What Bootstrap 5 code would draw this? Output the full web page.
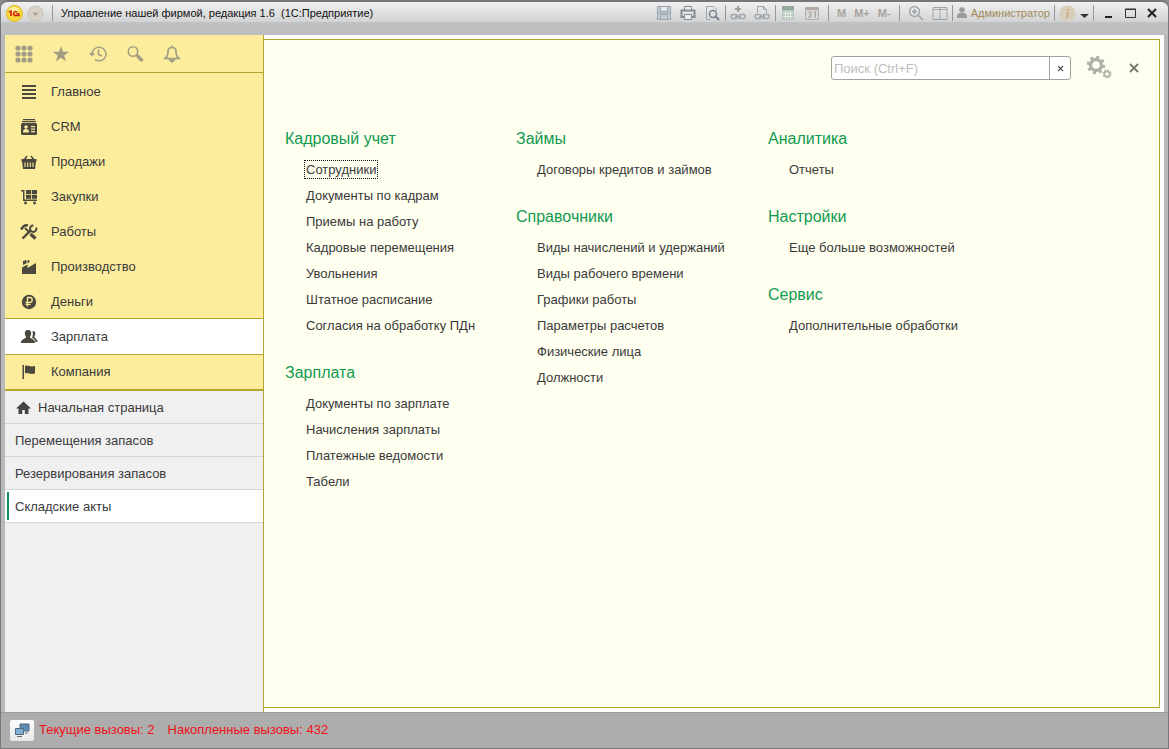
<!DOCTYPE html>
<html lang="ru">
<head>
<meta charset="utf-8">
<meta name="viewport" content="width=device-width, initial-scale=1">
<title>Управление нашей фирмой, редакция 1.6</title>
<link href="https://cdn.jsdelivr.net/npm/bootstrap@5.3.0/dist/css/bootstrap.min.css" rel="stylesheet">
<style>
  :root { --line: #b5a52a; --sun: #fced9d; --ink: #3a3a3a; --grn: #119a50; }
  body { font-family: "Liberation Sans", Arial, sans-serif; font-size: 13px; line-height: 20px; color: var(--ink); background: #8b8b8d; }
  a { color: inherit; text-decoration: none; }
  button { background: none; border: 0; padding: 0; color: inherit; display: inline-flex; align-items: center; justify-content: center; }
  svg { display: block; flex: none; }
  .window { border: 1px solid #77777b; border-top-width: 2px; border-radius: 8px 8px 0 0; background: #b9b9bb; padding: 0 4px 0 4px; overflow: hidden; }
  .titlebar { height: 33px; margin: 0 -4px; padding: 0 10px 11px 5px; background: linear-gradient(#f0f0f0 0, #d2d3d4 60%, #c0c1c2 62%, #bdbebf 100%); font-size: 11px; color: #111; }
  .caption { white-space: pre; }
  .tsep { width: 1px; height: 16px; background: #98989a; }
  .tsep.tight { margin: 0 4px 0 5px; }
  .tools { color: #9fa5ab; }
  .user { color: #a18a58; }
  .mem { font-weight: 700; font-size: 11px; color: #a8a29e; }
  .side { width: 259px; border-right: 1px solid var(--line); background: #f0f0f0; }
  .quick { height: 38px; padding-left: 9px; gap: 17px; background: var(--sun); border-bottom: 1px solid var(--line); color: #a39c84; }
  .quick button { width: 20px; height: 37px; }
  .sections { background: var(--sun); border-bottom: 2px solid var(--line); }
  .sections a { height: 35px; padding-left: 14px; padding-top: 2px; gap: 12px; }
  .sections a:last-child { height: 34px; padding-top: 0; }
  .sections a.current { height: 37px; padding-top: 0; background: #fff; border: solid var(--line); border-width: 1px 0; }
  .sections svg { color: #4b483d; }
  .opened a { height: 33px; padding-left: 10px; padding-top: 2px; gap: 6px; border-bottom: 1px solid #d5d5d5; position: relative; }
  .opened a.current { background: #fff; }
  .opened a.current::before { content: ""; position: absolute; left: 2px; top: 2px; bottom: 2px; width: 2px; background: #12905c; }
  .stage { background: #fff; padding: 4px 4px 4px 0; }
  .sheet { background: #fffff0; border: 1px solid var(--line); border-left: 0; }
  .sheet-head { height: 65px; padding: 0 19px 9px 0; }
  .finder { width: 240px; height: 24px; border: 1px solid #a3a39c; border-radius: 3px; background: #fff; overflow: hidden; }
  .finder input { border: 0; outline: 0; padding: 2px 2px 0; min-width: 0; color: var(--ink); background: none; }
  .finder input::placeholder { color: #bdbdbd; opacity: 1; }
  .finder button { width: 21px; border-left: 1px solid #a3a39c; }
  .menu { display: grid; grid-template-columns: 231px 252px 1fr; padding-left: 21px; }
  .menu h2 { font-size: 16px; line-height: 20px; font-weight: 400; color: var(--grn); margin: 0; padding: 24px 0 8px; }
  .menu ul { padding-left: 21px; }
  .menu li { line-height: 26px; }
  .menu a.focused { outline: 1px dotted #111; outline-offset: 1px; }
  .status { height: 36px; margin: 0 -4px; padding: 0 9px 1px; background: #adadad; border-top: 1px solid #9b9b9b; color: #f01018; gap: 5px; }
  .status button { width: 24px; height: 21px; background: linear-gradient(#fff, #e6e6e6); border-radius: 2px; }
</style>
</head>
<body>
<div class="window d-flex flex-column vh-100">
  <header class="titlebar d-flex align-items-center">
    <svg width="17" height="17" viewBox="0 0 17 17"><circle cx="8.500" cy="8.500" r="8" fill="#f9d93b" stroke="#e2b62a"/><ellipse cx="8" cy="5" rx="5" ry="3" fill="#fff3a0"/><path d="M3 7l2-1v5M11 7.200a2 2 0 1 0-1 3.300h4M10.500 8.800h3" fill="none" stroke="#cf2317" stroke-width="1.600"/></svg>
    <button class="ms-1" aria-label="Меню программы"><svg width="17" height="17" viewBox="0 0 17 17"><circle cx="8.500" cy="8.500" r="7.500" fill="#d8d2c6" stroke="#c5c0b6"/><path d="M5 7.500h7l-3.500 3.500z" fill="#aaa296"/></svg></button>
    <span class="tsep ms-2"></span>
    <span class="caption ms-2">Управление нашей фирмой, редакция 1.6  (1С:Предприятие)</span>
    <div class="tools d-flex align-items-center ms-auto">
      <div class="d-flex gap-2">
        <button aria-label="Сохранить"><svg width="16" height="16" viewBox="0 0 16 16" fill="none" stroke="currentColor"><path d="M1.500 1.500h13v13h-13zM4.500 1.500v5h7v-5M4.500 14.500v-5h7v5M1.500 8h13" fill="#c0ccd6"/></svg></button>
        <button aria-label="Печать"><svg width="16" height="16" viewBox="0 0 16 16" fill="none" stroke="#858d94"><path d="M4.500 5V1.500h7V5M4.500 9.500h7v5h-7z" fill="#eee"/><path d="M4 12H1.500V5.500h13V12H12" stroke-width="2"/></svg></button>
        <button aria-label="Просмотр"><svg width="16" height="16" viewBox="0 0 16 16" fill="none" stroke="currentColor"><path d="M6 14.500H2.500v-13h7l3 3V6"/><circle cx="9" cy="9" r="3.500" stroke="#78838d" stroke-width="1.500"/><path d="M11.500 11.500L15 15" stroke="#78838d" stroke-width="2"/></svg></button>
      </div>
      <span class="tsep tight"></span>
      <div class="d-flex gap-2">
        <button aria-label="Добавить ссылку"><svg width="16" height="16" viewBox="0 0 16 16" fill="none" stroke="currentColor"><path d="M8 1v6M5 4h6" stroke="#9f9f98" stroke-width="2"/><rect x="1" y="9.500" width="6" height="4" rx="1.500" stroke-width="1.400"/><rect x="9" y="9.500" width="6" height="4" rx="1.500" stroke-width="1.400"/><path d="M5 11.500h6" stroke-width="1.400"/></svg></button>
        <button aria-label="Перейти по ссылке"><svg width="16" height="16" viewBox="0 0 16 16" fill="none" stroke="currentColor"><path d="M3.500 8V1.500h6l3 3V8M9.500 1.500v3h3"/><rect x="1" y="9.500" width="6" height="4" rx="1.500" stroke-width="1.400"/><rect x="9" y="9.500" width="6" height="4" rx="1.500" stroke-width="1.400"/><path d="M5 11.500h6" stroke-width="1.400"/></svg></button>
      </div>
      <span class="tsep tight"></span>
      <div class="d-flex gap-2">
        <button aria-label="Калькулятор"><svg width="16" height="16" viewBox="0 0 16 16"><path d="M2 1h12v14H2z" fill="#b9c9bd"/><path d="M2 1h12v4H2z" fill="#93ab9c"/><path d="M5.500 6v8M8 6v8M10.500 6v8M3 8.500h10M3 11.500h10" stroke="#e5ebe6"/></svg></button>
        <button aria-label="Календарь"><svg width="16" height="16" viewBox="0 0 16 16"><path d="M1.500 2.500h13v12h-13z" fill="#d9d7d5" stroke="#b4afac"/><path d="M2 2h12v3H2z" fill="#b4aaa5"/><path d="M4 7h3v5H4M5 9.500h2M10 7.500l1.500-1V13" fill="none" stroke="#a2a0a0"/></svg></button>
      </div>
      <span class="tsep ms-2 me-1"></span>
      <div class="d-flex gap-2 ps-1 mem"><button class="fw-bold">M</button><button class="fw-bold">M+</button><button class="fw-bold">M-</button></div>
      <span class="tsep mx-2"></span>
      <div class="d-flex gap-2">
        <button aria-label="Масштаб"><svg width="16" height="16" viewBox="0 0 16 16" fill="none" stroke="currentColor"><circle cx="6.500" cy="6.500" r="5" stroke-width="1.300"/><path d="M4 6.500h5M6.500 4v5M10.500 10.500L15 15" stroke-width="1.600"/></svg></button>
        <button aria-label="Панели"><svg width="16" height="16" viewBox="0 0 16 16" fill="none" stroke="currentColor"><path d="M1 2.500h14v12H1zM8 2v12M1 4.500h14"/></svg></button>
      </div>
      <span class="tsep mx-1"></span>
      <button class="user"><svg class="me-1" width="10" height="12" viewBox="0 0 10 12" fill="#9b9b9b"><circle cx="5" cy="3" r="2.800"/><path d="M0 11c0-5 2-5 5-5s5 0 5 5z"/></svg>Администратор</button>
      <span class="tsep mx-1"></span>
      <button aria-label="О программе"><svg width="17" height="17" viewBox="0 0 17 17"><circle cx="8.500" cy="8.500" r="8" fill="#d9cebb"/><path d="M9 4v1.500M9 7l-1 5.500" stroke="#c3a878" stroke-width="1.600"/></svg></button>
      <button class="ms-1" aria-label="Еще"><svg width="9" height="12" viewBox="0 0 9 12"><path d="M0 7h9L4.500 11z" fill="#333"/></svg></button>
      <span class="tsep mx-1"></span>
      <div class="d-flex text-dark ms-1 gap-2">
        <button aria-label="Свернуть"><svg width="14" height="14" viewBox="0 0 14 14"><path d="M3 11h7" stroke="#222" stroke-width="2"/></svg></button>
        <button aria-label="Развернуть"><svg width="14" height="14" viewBox="0 0 14 14"><path d="M1.500 3.500h10v8h-10zM1 3h11" fill="none" stroke="#333"/></svg></button>
        <button aria-label="Закрыть окно"><svg width="12" height="14" viewBox="0 0 12 14"><path d="M2 3l8 8M10 3l-8 8" stroke="#222" stroke-width="2"/></svg></button>
      </div>
    </div>
  </header>

  <div class="d-flex flex-grow-1">
    <aside class="side flex-shrink-0">
      <div class="quick d-flex align-items-center">
        <button aria-label="Функции"><svg width="18" height="18" viewBox="0 0 18 18" fill="currentColor"><circle cx="3" cy="3" r="2.600"/><circle cx="9" cy="3" r="2.600"/><circle cx="15" cy="3" r="2.600"/><circle cx="3" cy="9" r="2.600"/><circle cx="9" cy="9" r="2.600"/><circle cx="15" cy="9" r="2.600"/><circle cx="3" cy="15" r="2.600"/><circle cx="9" cy="15" r="2.600"/><circle cx="15" cy="15" r="2.600"/></svg></button>
        <button aria-label="Избранное"><svg width="18" height="18" viewBox="0 0 18 18" fill="currentColor"><path d="M9 1l2 5.800h6.200l-5 3.600 1.900 6L9 12.800l-5.100 3.600 1.900-6-5-3.600H7z"/></svg></button>
        <button aria-label="История"><svg width="18" height="18" viewBox="0 0 18 18" fill="none" stroke="currentColor" stroke-width="1.500"><path d="M3 9a7 6.800 0 1 1 3 5.600M9.500 4.500v5l3.500 1.500"/><path d="M0 8h6l-3 3.500z" fill="currentColor" stroke="none"/></svg></button>
        <button aria-label="Поиск"><svg width="18" height="18" viewBox="0 0 18 18" fill="none" stroke="currentColor"><circle cx="7" cy="6.500" r="4.700" stroke-width="1.600"/><path d="M10.500 10l1.500 1.500" stroke-width="1.500"/><path d="M12 11.500l3.500 3.500" stroke-width="3.400" stroke-linecap="round"/></svg></button>
        <button aria-label="Уведомления"><svg width="18" height="18" viewBox="0 0 18 18" fill="none" stroke="currentColor" stroke-width="1.700"><path d="M9 2.500c-4 0-4 3-4.200 6-.1 2-.8 3.500-2.800 5h14c-2-1.500-2.700-3-2.800-5-.2-3-.2-6-4.200-6zM9 .5v2"/><path d="M7 15h4l-2 2z" fill="currentColor"/></svg></button>
      </div>
      <nav class="sections d-flex flex-column" aria-label="Разделы">
        <a href="#" class="d-flex align-items-center"><svg width="20" height="18" viewBox="0 0 20 18"><path d="M3 3h14M3 7h14M3 11h14M3 15h14" stroke="currentColor" stroke-width="2"/></svg>Главное</a>
        <a href="#" class="d-flex align-items-center"><svg width="20" height="18" viewBox="0 0 20 18" fill="currentColor"><path d="M4 1h12v1.200H4zM3 3h14v1.200H3z"/><rect x="2" y="5" width="16" height="12" rx="1.500"/><g fill="#fbed9e"><circle cx="7" cy="9" r="1.800"/><path d="M4 14.500c0-3 1-3.500 3-3.500s3 .5 3 3.500zM12 8h4v1.200h-4zM12 10.500h4v1.200h-4zM12 13h4v1.200h-4z"/></g></svg>CRM</a>
        <a href="#" class="d-flex align-items-center"><svg width="20" height="18" viewBox="0 0 20 18"><path d="M5 7l3-4M15 7l-3-4" stroke="currentColor" stroke-width="1.500"/><path d="M2.500 6h15v2.500H17L16 16H4L3 8.500h-.5z" fill="currentColor"/><path d="M6 9.500v4.500M8.700 9.500v4.500M11.300 9.500v4.500M14 9.500v4.500" stroke="#fbed9e" stroke-width="1.100"/></svg>Продажи</a>
        <a href="#" class="d-flex align-items-center"><svg width="20" height="18" viewBox="0 0 20 18" fill="currentColor"><path d="M2 2h3.500v9.500H18V13H4V3.500H2zM7 2h5v4H7zM12.800 2H18v4h-5.200zM7 6.800h5v4H7zM12.800 6.800H18v4h-5.200z"/><circle cx="6.500" cy="15" r="1.400"/><circle cx="15.500" cy="15" r="1.400"/></svg>Закупки</a>
        <a href="#" class="d-flex align-items-center"><svg width="20" height="18" viewBox="0 0 20 18" fill="none" stroke="currentColor"><path d="M3.500 15.500l8.500-8.500" stroke-width="2.400"/><path d="M17.200 4.500a3.200 3.200 0 1 1-2.800-2" stroke-width="2"/><path d="M2 6.500l3-3.500c1.500-1 3-.8 4-.3" stroke-width="2.600"/><path d="M6 5l5 5" stroke-width="1.800"/><path d="M11.500 11l5 4.500" stroke-width="3.200"/></svg>Работы</a>
        <a href="#" class="d-flex align-items-center"><svg width="20" height="18" viewBox="0 0 20 18" fill="currentColor"><path d="M3 16V9.500l5.500-3V10l8.500-5v11zM4 3l3.500-1v3.200L4 7zM8.500 2.500l1.800-.7V4.500l-1.800.8z"/></svg>Производство</a>
        <a href="#" class="d-flex align-items-center"><svg width="20" height="18" viewBox="0 0 20 18"><circle cx="10" cy="9" r="7.200" fill="currentColor"/><path d="M8.500 13.500v-9h2.300a2.400 2.400 0 0 1 0 4.800H6.500M6.500 11.400h5" fill="none" stroke="#fbed9e" stroke-width="1.300"/></svg>Деньги</a>
        <a href="#" class="current d-flex align-items-center" aria-current="page"><svg width="20" height="18" viewBox="0 0 20 18" fill="currentColor"><path d="M9 2c2.600 0 3.300 1.700 3.200 3.600-.1 1.700-.7 2.600-1.300 3.300.1 1.700 4.600 1.800 5.100 5.100v1H2v-1c.5-3.300 5-3.400 5.100-5.100-.6-.7-1.200-1.600-1.300-3.300C5.700 3.700 6.400 2 9 2z"/><path d="M13.500 3c2.300-.2 3 1.400 2.800 3-.1 1.300-.6 1.900-1 2.600.2 2 3 2 3.200 5.400h-1.700c-.6-2.500-2.500-3.200-3.800-4.300.8-1.500 1.200-4 .5-6.700z"/></svg>Зарплата</a>
        <a href="#" class="d-flex align-items-center"><svg width="20" height="18" viewBox="0 0 20 18" fill="currentColor"><path d="M3.500 2H5v14H3.500zM6 3c3-1.500 4.500 1.500 10 0v7.500c-5 1.500-7-1.500-10 0z"/></svg>Компания</a>
      </nav>
      <nav class="opened" aria-label="Открытые окна">
        <a href="#" class="d-flex align-items-center"><svg width="17" height="16" viewBox="0 0 17 16" fill="#444"><path d="M8.500 1.500L1 8.500h2.500V14h3.700v-4h2.600v4h3.700V8.500H16z"/></svg>Начальная страница</a>
        <a href="#" class="d-flex align-items-center">Перемещения запасов</a>
        <a href="#" class="d-flex align-items-center">Резервирования запасов</a>
        <a href="#" class="current d-flex align-items-center" aria-current="page">Складские акты</a>
      </nav>
    </aside>

    <main class="stage flex-grow-1 d-flex">
      <div class="sheet flex-grow-1">
        <div class="sheet-head d-flex align-items-center justify-content-end">
          <div class="finder d-flex">
            <input class="flex-grow-1" type="text" placeholder="Поиск (Ctrl+F)" aria-label="Поиск">
            <button aria-label="Очистить"><svg width="7" height="7" viewBox="0 0 7 7"><path d="M1 1l5 5M6 1L1 6" stroke="#555" stroke-width="1.200"/></svg></button>
          </div>
          <button class="ms-3" aria-label="Настройки"><svg width="25" height="24" viewBox="1 1 25 24" fill="none" stroke="#b0b0a8"><circle cx="10" cy="10" r="5.500" stroke-width="3.400"/><circle cx="10" cy="10" r="8" stroke-width="2.400" stroke-dasharray="3.140 3.140"/><circle cx="21" cy="19" r="2.700" stroke-width="1.700"/><circle cx="21" cy="19" r="3.900" stroke-width="1.300" stroke-dasharray="1.530 1.530"/></svg></button>
          <button class="ms-3" aria-label="Закрыть"><svg width="12" height="10" viewBox="0 0 12 10"><path d="M2 1l8 8M10 1L2 9" stroke="#77776e" stroke-width="1.800"/></svg></button>
        </div>
        <div class="menu">
          <div>
            <section><h2>Кадровый учет</h2>
              <ul class="list-unstyled mb-0"><li><a class="focused" href="#">Сотрудники</a></li><li><a href="#">Документы по кадрам</a></li><li><a href="#">Приемы на работу</a></li><li><a href="#">Кадровые перемещения</a></li><li><a href="#">Увольнения</a></li><li><a href="#">Штатное расписание</a></li><li><a href="#">Согласия на обработку ПДн</a></li></ul></section>
            <section><h2>Зарплата</h2>
              <ul class="list-unstyled mb-0"><li><a href="#">Документы по зарплате</a></li><li><a href="#">Начисления зарплаты</a></li><li><a href="#">Платежные ведомости</a></li><li><a href="#">Табели</a></li></ul></section>
          </div>
          <div>
            <section><h2>Займы</h2>
              <ul class="list-unstyled mb-0"><li><a href="#">Договоры кредитов и займов</a></li></ul></section>
            <section><h2>Справочники</h2>
              <ul class="list-unstyled mb-0"><li><a href="#">Виды начислений и удержаний</a></li><li><a href="#">Виды рабочего времени</a></li><li><a href="#">Графики работы</a></li><li><a href="#">Параметры расчетов</a></li><li><a href="#">Физические лица</a></li><li><a href="#">Должности</a></li></ul></section>
          </div>
          <div>
            <section><h2>Аналитика</h2>
              <ul class="list-unstyled mb-0"><li><a href="#">Отчеты</a></li></ul></section>
            <section><h2>Настройки</h2>
              <ul class="list-unstyled mb-0"><li><a href="#">Еще больше возможностей</a></li></ul></section>
            <section><h2>Сервис</h2>
              <ul class="list-unstyled mb-0"><li><a href="#">Дополнительные обработки</a></li></ul></section>
          </div>
        </div>
      </div>
    </main>
  </div>

  <footer class="status d-flex align-items-center">
    <button aria-label="Соединение"><svg width="16" height="16" viewBox="0 0 16 16"><path d="M6 2h9v7H6z" fill="#5d8db5" stroke="#52677a"/><path d="M1.500 6.500h8v6h-8z" fill="#7fb0d8" stroke="#52677a"/><path d="M3 14.500h5M11 11h3" stroke="#5b6a78"/></svg></button>
    <span>Текущие вызовы: 2</span>
    <span class="ms-2">Накопленные вызовы: 432</span>
  </footer>
</div>
<script src="https://cdn.jsdelivr.net/npm/bootstrap@5.3.0/dist/js/bootstrap.bundle.min.js"></script>
</body>
</html>
